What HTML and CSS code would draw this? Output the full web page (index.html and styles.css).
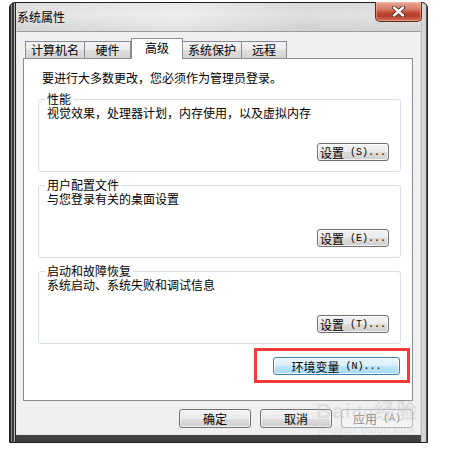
FILE: index.html
```html
<!DOCTYPE html>
<html lang="zh-CN">
<head>
<meta charset="utf-8">
<title>系统属性</title>
<link rel="stylesheet" href="styles.css">
</head>
<body>
<div class="window">
  <div class="titlebar">
    <span class="title">系统属性</span>
    <button class="close" aria-label="关闭">
      <svg width="17" height="11" viewBox="0 0 17 11">
        <path d="M4 1.5 L13 9.5 M13 1.5 L4 9.5" stroke="#4a2a22" stroke-width="4.2" stroke-linecap="round" fill="none"/>
        <path d="M4 1.5 L13 9.5 M13 1.5 L4 9.5" stroke="#ffffff" stroke-width="2.4" stroke-linecap="round" fill="none"/>
      </svg>
    </button>
  </div>
  <div class="client">
    <div class="tabs">
      <div class="tab t1">计算机名</div>
      <div class="tab t2">硬件</div>
      <div class="tab t3 selected">高级</div>
      <div class="tab t4">系统保护</div>
      <div class="tab t5">远程</div>
    </div>
    <div class="panel">
      <p class="notice">要进行大多数更改，您必须作为管理员登录。</p>
      <fieldset class="group">
        <legend>性能</legend>
        <p class="desc">视觉效果，处理器计划，内存使用，以及虚拟内存</p>
        <div class="row"><button class="btn set">设置<span class="asc"> (S)...</span></button></div>
      </fieldset>
      <fieldset class="group">
        <legend>用户配置文件</legend>
        <p class="desc">与您登录有关的桌面设置</p>
        <div class="row"><button class="btn set">设置<span class="asc"> (E)...</span></button></div>
      </fieldset>
      <fieldset class="group">
        <legend>启动和故障恢复</legend>
        <p class="desc">系统启动、系统失败和调试信息</p>
        <div class="row"><button class="btn set">设置<span class="asc"> (T)...</span></button></div>
      </fieldset>
      <div class="envrow">
        <div class="highlight">
          <button class="btn env">环境变量<span class="asc"> (N)...</span></button>
        </div>
      </div>
    </div>
    <div class="actions">
      <button class="btn act">确定</button>
      <button class="btn act">取消</button>
      <button class="btn act disabled">应用<span class="asc"> (A)</span></button>
    </div>
  </div>
</div>
<div class="watermark">
  <div class="wm-big">Bai<span class="paw">du</span>经验</div>
  <div class="wm-small">jingyan.baidu.com</div>
</div>
</body>
</html>
```

FILE: styles.css
```css
* { box-sizing: border-box; }

html, body {
  margin: 0;
  padding: 0;
  background: #ffffff;
}

body {
  position: relative;
  width: 458px;
  height: 451px;
  overflow: hidden;
  font-family: "Noto Sans CJK SC", "Noto Sans", sans-serif;
  font-size: 12px;
  color: #000;
}

p { margin: 0; }

.window {
  margin: 2px 0 0 9px;
  width: 419px;
  height: 441px;
  border: 1px solid #1e201e;
  border-radius: 6px 6px 0 0;
  padding: 0 6px 7px 6px;
  display: flex;
  flex-direction: column;
  background:
    linear-gradient(to right, #2a2a2a 0, #2a2a2a 1px, #8a8a8a 1px, #8a8a8a 2px, #3a3a3a 2px, #3a3a3a 4px, #b5b5b5 4px, #b5b5b5 5px, #262626 5px, #262626 6px) left top / 6px 100% no-repeat,
    linear-gradient(to left, #5a5a5a 0, #5a5a5a 1px, #cfcfcf 1px, #d8d8d8 5px, #a9a9a9 6px) right top / 6px 100% no-repeat,
    linear-gradient(to bottom, #dcdcdc 0, #e4e4e4 12px, #d2d2d2 28px, #c4c4c4 120px, #9c9c9c 300px, #4a4c4a 425px, #3b3d3b 100%);
}

.titlebar {
  height: 28px;
  display: flex;
  align-items: flex-start;
  margin: 0 -1px 0 1px;
  background: linear-gradient(to right, rgba(255,255,255,0) 0, rgba(255,255,255,0.35) 40%, rgba(200,200,200,0.2) 70%, rgba(255,255,255,0) 100%);
}

.title {
  margin-top: 7px;
  line-height: 14px;
  color: #000;
}

.close {
  margin: -1px 0 0 auto;
  width: 47px;
  height: 20px;
  padding: 0;
  border: 1px solid #5e2a20;
  border-top: none;
  border-radius: 0 0 5px 5px;
  display: flex;
  align-items: center;
  justify-content: center;
  background: linear-gradient(to bottom, #e9a996 0, #d67966 40%, #c24a33 55%, #b8402a 75%, #d0735e 100%);
  box-shadow: inset 0 0 0 1px rgba(255, 200, 180, 0.45);
}

.client {
  flex: 1;
  background: #f0f0f0;
  border: 1px solid #9c9c9c;
  border-left-color: #e6e6e6;
  border-right-color: #dadada;
  border-bottom-color: #e2e2e2;
  padding: 6px 7px 6px 6px;
  display: flex;
  flex-direction: column;
}

.tabs {
  height: 20px;
  display: flex;
  align-items: flex-end;
  padding-left: 2px;
}

.tab {
  height: 17px;
  border: 1px solid #898c95;
  border-bottom: none;
  background: linear-gradient(to bottom, #f3f3f3 0, #ebebeb 50%, #dddddd 51%, #d5d5d5 100%);
  text-align: center;
  line-height: 16px;
  margin-left: -1px;
}

.t1 { width: 60px; margin-left: 0; }
.t2 { width: 47px; }
.t3 { width: 52px; margin-left: 0; }
.t4 { width: 60px; }
.t5 { width: 46px; }

.tab.selected {
  height: 21px;
  margin-bottom: -1px;
  background: #ffffff;
  position: relative;
  z-index: 1;
  line-height: 18px;
}

.panel {
  height: 343px;
  background: #ffffff;
  border: 1px solid #898c95;
  padding: 12px 11px 0 14px;
  display: flex;
  flex-direction: column;
}

.notice {
  line-height: 14px;
  padding-left: 4px;
  margin-bottom: 8px;
}

.group {
  margin: 0 0 7px 0;
  padding: 0 11px 10px 8px;
  border: 1px solid #d5dfe5;
  border-radius: 3px;
  min-width: 0;
}

.group legend {
  padding: 0 2px;
  margin-left: -2px;
  line-height: 12px;
  height: 12px;
}

.desc {
  line-height: 13px;
  padding-top: 1px;
  height: 14px;
}

.row {
  display: flex;
  justify-content: flex-end;
  margin-top: 24px;
}

.btn {
  font-family: "Noto Sans CJK SC", "Noto Sans", sans-serif;
  font-size: 12px;
  color: #000;
  height: 18px;
  padding: 0;
  border: 1px solid #707070;
  border-radius: 3px;
  background: linear-gradient(to bottom, #f2f2f2 0, #ebebeb 50%, #dddddd 51%, #cfcfcf 100%);
  box-shadow: inset 0 0 0 1px rgba(255,255,255,0.7);
  line-height: 15px;
  display: flex;
  align-items: center;
  justify-content: center;
  white-space: pre;
}

.asc {
  font-family: "Liberation Mono", monospace;
  font-size: 10px;
}

.set { width: 72px; }

.envrow {
  display: flex;
  justify-content: flex-end;
  margin: -3px -9px 0 0;
}

.highlight {
  border: 3px solid #f13b3b;
  padding: 6px 7px 5px 16px;
}

.env {
  width: 127px;
  border-color: #3c7fb1;
  background: linear-gradient(to bottom, #eaf6fd 0, #d9f0fc 50%, #bee6fd 51%, #a7d9f5 100%);
}

.actions {
  margin-top: 8px;
  height: 19px;
  display: flex;
  justify-content: flex-end;
  gap: 9px;
}

.act { width: 72px; height: 19px; }

.disabled {
  color: #8a8a8a;
  border-color: #adb2b5;
  background: #f4f4f4;
  box-shadow: none;
}

.watermark {
  position: absolute;
  left: 316px;
  top: 400px;
  color: rgba(200, 200, 200, 0.45);
  text-align: center;
  pointer-events: none;
}

.wm-big {
  font-family: "Liberation Sans", sans-serif;
  font-size: 21px;
  font-weight: bold;
  line-height: 22px;
  letter-spacing: 1px;
}

.wm-big .paw {
  font-size: 17px;
}

.wm-small {
  font-family: "Liberation Sans", sans-serif;
  font-size: 10px;
  line-height: 11px;
  letter-spacing: 1px;
}
```
